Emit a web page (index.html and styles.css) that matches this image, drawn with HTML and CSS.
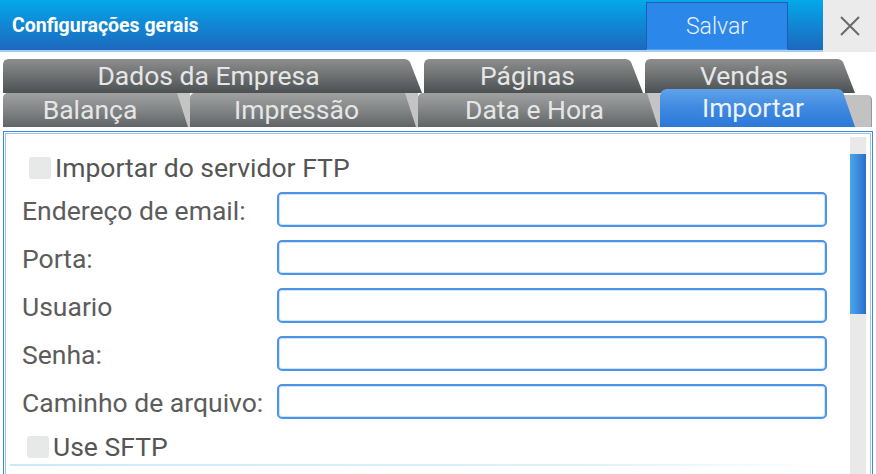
FILE: index.html
```html
<!DOCTYPE html>
<html lang="pt">
<head>
<meta charset="utf-8">
<title>Configurações gerais</title>
<link rel="stylesheet" href="styles.css">
</head>
<body>
<div class="app">
  <header class="topbar">
    <div class="titlebar">
      <h1 class="title">Configurações gerais</h1>
      <button class="save">Salvar</button>
    </div>
    <div class="close">
      <svg width="22" height="20" viewBox="0 0 22 20"><path d="M2 1 L20 19 M20 1 L2 19" stroke="#6a6a6a" stroke-width="2" fill="none"/></svg>
    </div>
  </header>

  <nav class="tabs">
    <div class="tabrow back">
      <div class="tab t-dados"><span>Dados da Empresa</span></div>
      <div class="tab t-paginas"><span>Páginas</span></div>
      <div class="tab t-vendas"><span>Vendas</span></div>
    </div>
    <div class="tabrow front">
      <div class="slot s-balanca"><div class="face"><span>Balança</span></div></div>
      <div class="slot s-impressao"><div class="face"><span>Impressão</span></div></div>
      <div class="slot s-data"><div class="face"><span>Data e Hora</span></div></div>
      <div class="slot s-importar"><div class="face active"><span>Importar</span></div><div class="filler"></div></div>
    </div>
  </nav>

  <section class="panel">
    <div class="form">
      <label class="check c-ftp"><span class="box"></span><span>Importar do servidor FTP</span></label>
      <div class="grid">
        <span class="lbl">Endereço de email:</span><span class="input"></span>
        <span class="lbl">Porta:</span><span class="input"></span>
        <span class="lbl">Usuario</span><span class="input"></span>
        <span class="lbl">Senha:</span><span class="input"></span>
        <span class="lbl">Caminho de arquivo:</span><span class="input"></span>
      </div>
      <label class="check c-sftp"><span class="box"></span><span>Use SFTP</span></label>
      <div class="sep"></div>
    </div>
    <div class="scroll"><div class="thumb"></div></div>
  </section>
</div>
</body>
</html>
```

FILE: styles.css
```css
html, body {
  margin: 0;
  padding: 0;
  background: #fff;
  overflow: hidden;
}
body {
  width: 876px;
  height: 474px;
  font-family: Roboto, "Noto Sans", "Liberation Sans", sans-serif;
}
.app {
  width: 876px;
  height: 474px;
  overflow: hidden;
}

/* ---------- header ---------- */
.topbar {
  display: flex;
  height: 52px;
}
.titlebar {
  width: 823px;
  height: 50px;
  display: flex;
  align-items: flex-start;
  background: linear-gradient(to bottom, #03a9ea 0%, #0f8ad6 45%, #1d69bd 100%);
  border-bottom: 2px solid #a9cbef;
}
.title {
  margin: 0;
  padding-left: 12px;
  line-height: 52px;
  font-size: 19.5px;
  font-weight: 700;
  color: #fff;
}
.save {
  margin: 2px 35px 0 auto;
  width: 142px;
  height: 48px;
  background: #2c87ea;
  border: 1px solid #1c5fb2;
  border-bottom-color: #4d9df0;
  color: #e9f2ff;
  font-family: Roboto, "Noto Sans", sans-serif;
  font-weight: 300;
  font-size: 23px;
  padding: 0;
}
.close {
  width: 53px;
  height: 52px;
  background: #ebebeb;
  display: flex;
  align-items: center;
  justify-content: center;
}

/* ---------- tabs ---------- */
.tabs {
  padding: 7px 0 0 3px;
  height: 70px;
}
.tabrow {
  display: flex;
  height: 34px;
}
.tab, .face {
  display: flex;
  align-items: center;
  justify-content: center;
  font-size: 26.5px;
  line-height: 30px;
  color: #e6e6e6;
  box-sizing: border-box;
  white-space: nowrap;
}
.tab {
  height: 34px;
  padding-right: 14px;
  background: linear-gradient(to bottom, #8d8d8d 0%, #6d7071 50%, #4b5052 100%);
  clip-path: polygon(0 100%, 0 5px, 1px 2px, 2px 1px, 5px 0,
    calc(100% - 19px) 0, calc(100% - 16px) 1px, calc(100% - 14px) 3px, calc(100% - 2px) 100%);
}
.t-dados { width: 421px; padding-right: 10px; }
.t-paginas { width: 221px; }
.t-vendas { width: 212px; }

.front {
  align-items: flex-end;
}
.slot {
  height: 34px;
  background: #c4c4c4;
  border-top-left-radius: 5px;
  display: flex;
}
.face {
  width: 100%;
  height: 34px;
  padding-right: 12px;
  background: linear-gradient(to bottom, #a0a0a0 0%, #7f8283 55%, #606466 100%);
  border-top-left-radius: 5px;
  clip-path: polygon(0 100%, 0 0, calc(100% - 13px) 0, calc(100% - 2px) 100%);
}
.s-balanca { width: 187px; }
.s-balanca .face { padding-right: 13px; }
.s-impressao { width: 228px; }
.s-impressao .face { padding-right: 15px; }
.s-data { width: 242px; }
.s-data .face { padding-right: 9px; }

.s-importar {
  width: 212px;
  height: 38px;
  margin-top: -4px;
  background: none;
  align-items: flex-end;
}
.face.active {
  flex: none;
  width: 197px;
  height: 38px;
  margin-right: -14px;
  position: relative;
  z-index: 1;
  padding-right: 11px;
  color: #eef4ff;
  background: linear-gradient(to bottom, #5fa2ea 0%, #3f89e0 50%, #2c78d7 100%);
  border-top-left-radius: 6px;
  clip-path: polygon(0 100%, 0 6px, 1px 3px, 3px 1px, 6px 0,
    calc(100% - 19px) 0, calc(100% - 16px) 1px, calc(100% - 14px) 3px, calc(100% - 2px) 100%);
}
.filler {
  width: 29px;
  height: 32px;
  background: #c2c2c2;
  border-top-right-radius: 5px;
  border-right: 1px solid #8e9aa4;
  box-sizing: border-box;
}

/* ---------- panel ---------- */
.panel {
  margin: 2px 3px 0 3px;
  height: 360px;
  border: 1px solid #3b8ae0;
  box-shadow: inset 0 0 0 1px #fff, inset 0 0 0 2px #9ac6f2;
  display: flex;
  box-sizing: border-box;
}
.form {
  flex: 1;
  padding: 24px 23px 0 18px;
}
.check {
  display: flex;
  align-items: center;
  gap: 4px;
  height: 24px;
  line-height: 24px;
  font-size: 26.5px;
  color: #555;
  white-space: nowrap;
}
.c-ftp { margin-left: 7px; }
.c-sftp { margin-left: 5px; margin-top: 16px; }
.box {
  flex: none;
  width: 22px;
  height: 22px;
  border-radius: 3px;
  background: #e7e9e9;
}
.grid {
  margin-top: 12px;
  display: grid;
  grid-template-columns: 255px 1fr;
  grid-auto-rows: 35px;
  row-gap: 13px;
  align-items: center;
}
.lbl {
  font-size: 26.5px;
  line-height: 30px;
  padding-top: 3px;
  color: #5c5c5c;
  white-space: nowrap;
}
.input {
  height: 35px;
  border: 2px solid #4b94ec;
  border-radius: 5px;
  box-sizing: border-box;
  box-shadow: inset 0 0 0 1px #cfe3fb;
  background: #fff;
}
.sep {
  margin-top: 5px;
  height: 2px;
  margin-left: -12px;
  background: linear-gradient(to right, #cde9f8 0%, #dff1fb 70%, rgba(255,255,255,0) 100%);
}
.scroll {
  width: 16px;
  margin: 5px 6px 0 0;
  background: #e9e9e9;
}
.thumb {
  margin-top: 17px;
  height: 160px;
  background: linear-gradient(to right, #4aa6ea 0%, #3c8cdc 50%, #2a6dc9 100%);
}
```
